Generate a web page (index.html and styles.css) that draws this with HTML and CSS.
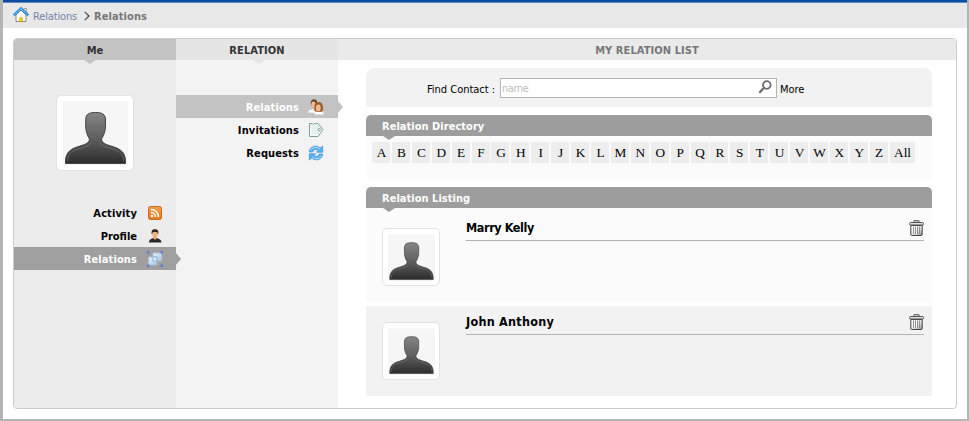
FILE: index.html
```
<!DOCTYPE html>
<html lang="en">
<head>
<meta charset="utf-8">
<title>Relations</title>
<link rel="stylesheet" href="styles.css">
</head>
<body>
<svg class="defs" width="0" height="0">
  <defs>
    <linearGradient id="body" x1="0" y1="0" x2="0" y2="1"><stop offset="0" stop-color="#858585"/><stop offset=".5" stop-color="#606060"/><stop offset="1" stop-color="#2c2c2c"/></linearGradient>
    <linearGradient id="orange" x1="0" y1="0" x2="0" y2="1"><stop offset="0" stop-color="#f7a04a"/><stop offset="1" stop-color="#e87722"/></linearGradient>
    <linearGradient id="glass" x1="0" y1="0" x2="1" y2="1"><stop offset="0" stop-color="#e5f1fb"/><stop offset="1" stop-color="#a3c4e3"/></linearGradient>
    <linearGradient id="can" x1="0" y1="0" x2="1" y2="1"><stop offset="0" stop-color="#fff"/><stop offset=".6" stop-color="#ddd"/><stop offset="1" stop-color="#888"/></linearGradient>
    <symbol id="person" viewBox="0 0 65 64">
      <rect width="65" height="64" fill="#f6f6f6"/>
      <path d="M2.500 62.500C2 53 6 48.500 14 46C22 43.500 26 42.500 26.500 38C24 34 22.700 30 22.700 25V19C22.700 13 26 11.500 32.500 11.500S42.500 13 42.500 19V25C42.500 30 41 34 38.500 38C39 42.500 43 43.500 51 46C59 48.500 63 53 62.500 62.500Z" fill="url(#body)" stroke="#454545"/>
      <path d="M4.500 60C4.500 54 8 50 15 48C22 46 26 45 28 42M60.500 60C60.500 54 57 50 50 48C43 46 39 45 37 42" fill="none" stroke="#777" stroke-width=".7"/>
    </symbol>
    <symbol id="trash" viewBox="0 0 15 16">
      <path d="M5 2V.7H10V2" fill="#ddd" stroke="#555"/>
      <path d="M1.800 5.500H13.200V15L12.500 15.500H2.500L1.800 15Z" fill="url(#can)" stroke="#444"/>
      <rect x=".5" y="2.500" width="14" height="2.500" rx="1" fill="#ddd" stroke="#555"/>
      <path d="M4.500 6.500V14M6.500 6.500V14M8.500 6.500V14M10.500 6.500V14" stroke="#888" stroke-width=".9"/>
      <path d="M3.500 6.500V14M5.500 6.500V14M7.500 6.500V14" stroke="#fff" stroke-width=".6"/>
    </symbol>
  </defs>
</svg>
<div class="frame">
  <nav class="crumbs">
    <svg class="home" viewBox="0 0 16 16"><path d="M3 8V14.500H13V8L8 3Z" fill="#fafafa" stroke="#888"/><path d="M11 1.500H13.500V6L11 4Z" fill="#eee" stroke="#888" stroke-width=".7"/><path d="M.8 8.300L8 1.500L15.200 8.300" fill="none" stroke="#2586c9" stroke-width="2.600"/><path d="M1.500 7.800L8 1.700L14.500 7.800" fill="none" stroke="#b9e8fc" stroke-width="1" stroke-dasharray="1.500 .7"/><path d="M6.500 14.800V11Q8 9 9.500 11V14.800Z" fill="#f2cf10" stroke="#b99b10" stroke-width=".5"/></svg>
    <a class="crumb">Relations</a>
    <svg class="chev" viewBox="0 0 6 10"><path d="M.8.8L5 5L.8 9.200" fill="none" stroke="#444" stroke-width="1.200"/></svg>
    <b class="here">Relations</b>
  </nav>
  <div class="panel">
    <section class="col me">
      <h2 class="head notch">Me</h2>
      <div class="avatar big"><svg><use href="#person"/></svg></div>
      <ul class="menu">
        <li><span>Activity</span><svg viewBox="0 0 16 16"><rect x="1.500" y="1.500" width="13" height="13" rx="2" fill="url(#orange)" stroke="#c66b20"/><circle cx="5" cy="11" r="1.300" fill="#fff"/><path d="M4 7.500A4.500 4.500 0 0 1 8.500 12M4 4.500A7.500 7.500 0 0 1 11.500 12" fill="none" stroke="#fff" stroke-width="1.500"/></svg></li>
        <li><span class="tight">Profile</span><svg viewBox="0 0 16 16"><path d="M2 14.500C2 11.500 4 11 6.500 10L8 11L9.500 10C12 11 14.500 11.500 14.500 14.500Z" fill="#292929"/><path d="M6.500 8H9.500V10.500L8 12L6.500 10.500Z" fill="#e3a16c"/><ellipse cx="8" cy="6" rx="2.700" ry="3.500" fill="#edb37c"/><path d="M4.800 6.500C4 2.500 5.500 1.300 8 1.300S12 2.500 11.200 6.500L10 4L6 4Z" fill="#35241c"/></svg></li>
        <li class="on"><span>Relations</span><svg viewBox="0 0 16 16"><rect x="6" y="2" width="8.500" height="8" fill="url(#glass)" stroke="#a9c4df" stroke-width=".8"/><rect x="1.500" y="6" width="8.500" height="8" fill="url(#glass)" stroke="#a3bfda" stroke-width=".8"/><path d="M6 6H10V10H6Z" fill="#e0edf8" stroke="#7b9fc5" stroke-width=".7"/><g fill="#dbe5ff" stroke="#3655d8" stroke-width="1"><circle cx="1.200" cy="1.400" r=".9"/><circle cx="14.800" cy="1.400" r=".9"/><circle cx="1.200" cy="14.700" r=".9"/><circle cx="14.800" cy="14.700" r=".9"/></g></svg></li>
      </ul>
    </section>
    <section class="col relation">
      <h2 class="head notch">RELATION</h2>
      <ul class="menu">
        <li class="on"><span>Relations</span><svg viewBox="0 0 16 16"><path d="M0 13.500C0 11 3 11 4 10.300L8 11L10 13L14 12Q16 13 15.800 15.500H7V14Z" fill="#fff" stroke="#ddd" stroke-width=".5"/><path d="M2.700 4.500C2.500 1 5-.2 7 .4S9.500 3 9 6L7 9L4 8Z" fill="#683d2c"/><ellipse cx="5.500" cy="5.800" rx="2.200" ry="3.300" fill="#f0bd90"/><path d="M6.500 12C6 7 6.500 3 10.500 3S15.500 7 14.800 12L12.500 13H9Z" fill="#9e5a30"/><ellipse cx="10.300" cy="9" rx="2.400" ry="3.400" fill="#f2ba8b"/></svg></li>
        <li><span>Invitations</span><svg viewBox="0 0 16 16"><path d="M1.500 1.500H4.500L5.500 2.500L6.500 1.500H10L15 7.700L10 14.500H1.500Z" fill="#e5f1ee" stroke="#829c98"/><path d="M2.700 3V13.300H9.500L13.500 7.700" fill="none" stroke="#fff"/><circle cx="11.200" cy="7.700" r="1.200" fill="#fff" stroke="#829c98"/></svg></li>
        <li><span>Requests</span><svg viewBox="0 0 16 16"><g fill="#58b2ef" stroke="#3d86cf" stroke-width=".6"><path d="M1.300 7C1.500 1.300 8-.5 12.300 2.800L14.700 1V7.300H8.300L10 5.300C8 3.900 5.500 4.700 4.800 7Z"/><path d="M14.700 9C14.500 14.700 8 16.500 3.700 13.200L1.300 15V8.700H7.700L6 10.700C8 12.100 10.500 11.300 11.200 9Z"/></g><path d="M2.600 5.500C4 2.200 8.500 1.200 12 4.200M4 11.800C7 14.800 11.500 14.500 13.400 10.500" fill="none" stroke="#b3e2fd"/></svg></li>
      </ul>
    </section>
    <section class="col main">
      <h2 class="head">MY RELATION LIST</h2>
      <div class="content">
        <form class="search">
          <label for="find">Find Contact :</label>
          <div class="field"><input id="find" placeholder="name"><svg viewBox="0 0 14 14"><circle cx="8.800" cy="5" r="3.800" fill="#fff" stroke="#6e6e6e" stroke-width="1.800"/><path d="M6 7.800L1.300 12.700" stroke="#6e6e6e" stroke-width="2.200"/></svg></div>
          <span class="more">More</span>
        </form>
        <h3 class="bar notch">Relation Directory</h3>
        <div class="letters"><a>A</a><a>B</a><a>C</a><a>D</a><a>E</a><a>F</a><a>G</a><a>H</a><a>I</a><a>J</a><a>K</a><a>L</a><a>M</a><a>N</a><a>O</a><a>P</a><a>Q</a><a>R</a><a>S</a><a>T</a><a>U</a><a>V</a><a>W</a><a>X</a><a>Y</a><a>Z</a><a class="all">All</a></div>
        <h3 class="bar notch">Relation Listing</h3>
        <article class="row first">
          <div class="avatar small"><svg><use href="#person"/></svg></div>
          <div class="name"><b>Marry Kelly</b><svg><use href="#trash"/></svg></div>
        </article>
        <article class="row second">
          <div class="avatar small"><svg><use href="#person"/></svg></div>
          <div class="name"><b class="wide">John Anthony</b><svg><use href="#trash"/></svg></div>
        </article>
      </div>
    </section>
  </div>
</div>
</body>
</html>
```
FILE: styles.css
```
* { box-sizing: border-box; }
html, body { margin: 0; height: 100%; overflow: hidden; }
body { font: 11px/16px "DejaVu Sans Condensed", "DejaVu Sans", sans-serif; font-stretch: condensed; color: #000; background: #fff; }
svg { display: block; flex: none; }
.defs { position: absolute; }
h2, h3, ul { margin: 0; padding: 0; list-style: none; }
.frame { height: 421px; border: solid #b4b4b4; border-width: 0 2px 2px 3px; }
.frame::before { content: ""; display: block; height: 3px; background: linear-gradient(#0b4da2 0 2px, #5d88c0 2px); }
.crumbs { display: flex; align-items: center; height: 25px; padding: 0 0 0 10px; background: #e8e8e8; white-space: nowrap; }
.home { width: 16px; height: 16px; margin-top: -1px; }
.crumb { width: 44px; margin-left: 4px; color: #7483ad; letter-spacing: -.15px; padding-top: 2px; }
.chev { width: 6px; height: 10px; margin: 0 4px 0 7px; }
.here { color: #777; letter-spacing: .08px; padding-top: 2px; }
.panel { display: flex; width: 944px; height: 371px; margin: 10px 0 0 10px; border: 1px solid #ccc; border-radius: 4px; overflow: hidden; }
.col { position: relative; width: 162px; flex: none; }
.me { z-index: 2; background: #ececec; --notch: #c3c3c3; }
.relation { z-index: 1; background: #f3f3f3; --notch: #e5e5e5; }
.main { flex: 1; }
.head { height: 21px; line-height: 23px; font-size: 11px; text-align: center; color: #333; letter-spacing: .08px; background: #eaeaea; }
.me .head, .relation .head { background: var(--notch); }
.main .head { color: #777; }
.notch { position: relative; }
.notch::after { content: ""; position: absolute; top: 100%; left: 70px; border: solid transparent; border-width: 4px 6px 0; border-top-color: var(--notch); }
.relation .notch::after { left: 77px; }
.avatar { background: #fff; border: 1px solid #e2e2e2; border-radius: 5px; }
.big { width: 78px; height: 76px; margin: 35px 0 30px 42px; padding: 5px 5px 5px 6px; }
.big svg { width: 65px; height: 64px; }
.menu { font-weight: bold; }
.relation .menu { margin-top: 35px; }
.menu li { display: flex; align-items: center; justify-content: flex-end; gap: 10px; height: 23px; padding-right: 13px; position: relative; letter-spacing: .12px; }
.menu span { padding-top: 2px; }
.menu .tight { letter-spacing: 0; }
.menu svg { width: 16px; height: 16px; }
.menu .on { color: #fff; background: var(--on); }
.relation .menu svg { margin-right: 1px; }
.relation .menu li { gap: 9px; }
.me .on { --on: #9f9f9f; }
.relation .on { --on: #c3c3c3; }
.on::after { content: ""; position: absolute; left: 100%; top: 6px; border: solid transparent; border-width: 6px 0 6px 5px; border-left-color: var(--on); }
.content { width: 566px; margin: 8px 0 0 28px; --notch: #9d9d9d; }
.search { display: flex; align-items: center; height: 39px; padding-left: 61px; border-radius: 8px 8px 0 0; background: #f2f2f2; white-space: nowrap; }
.search label { width: 73px; padding-top: 4px; letter-spacing: -.02px; }
.field { display: flex; align-items: center; width: 277px; height: 20px; padding-right: 4px; border: 1px solid #b4b4b4; background: #fff; }
.field input { flex: 1; min-width: 0; padding: 2px 0 0 1px; border: 0; outline: 0; background: none; font: inherit; letter-spacing: -.4px; }
.field input::placeholder { color: #bdbdbd; opacity: 1; }
.field svg { width: 14px; height: 14px; margin-top: -1px; }
.more { margin-left: 3px; padding-top: 4px; letter-spacing: -.05px; }
.bar { height: 21px; margin-top: 8px; padding-left: 16px; border-radius: 5px 5px 0 0; background: #9d9d9d; color: #fff; font-size: 11px; line-height: 23px; letter-spacing: .03px; }
.bar.notch::after { left: 17px; }
.letters { display: flex; gap: 1.92px; height: 43px; padding: 6px 6px 0; background: #fbfbfb; }
.letters a { width: 18px; height: 21px; padding-left: 1px; background: #ededed; font: 13.3px/21px "Liberation Serif", serif; text-align: center; }
.letters .all { width: 25px; }
.row { display: flex; padding-left: 16px; }
.first { height: 94px; padding-top: 20px; background: #fbfbfb; }
.second { height: 90px; margin-top: 4px; padding-top: 16px; background: #f2f2f2; }
.small { flex: none; width: 58px; height: 58px; padding: 5px; }
.small svg { width: 47px; height: 47px; }
.name { display: flex; justify-content: space-between; width: 458px; height: 25px; margin: -12px 0 0 26px; padding-top: 4px; border-bottom: 1px solid #b3b3b3; font-size: 12.5px; }
.name b { letter-spacing: -.4px; }
.name .wide { letter-spacing: .25px; }
.name svg { width: 15px; height: 16px; }
```
